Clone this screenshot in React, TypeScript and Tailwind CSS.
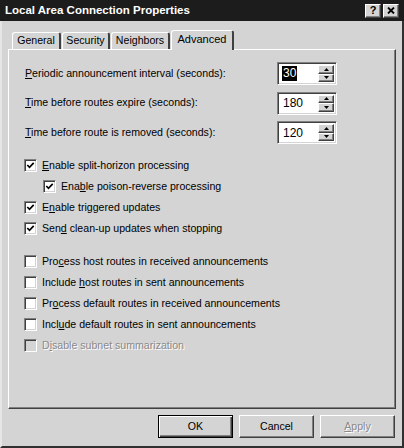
import React from 'react';

const raised =
  'border border-t-white border-l-white border-r-[#404040] border-b-[#404040] shadow-[inset_-1px_-1px_0_#808080]';
const sunken =
  'border border-t-[#808080] border-l-[#808080] border-r-white border-b-white shadow-[inset_1px_1px_0_#404040,inset_-1px_-1px_0_#d4d4d4]';

const CheckMark = () => (
  <svg width="9" height="9" viewBox="0 0 9 9">
    <polyline points="1.3,4 3.5,6.3 7.7,1.8" fill="none" stroke="#000" strokeWidth="1.7" />
  </svg>
);

const Check: React.FC<{
  checked?: boolean;
  disabled?: boolean;
  indent?: boolean;
  children: React.ReactNode;
}> = ({ checked, disabled, indent, children }) => (
  <div className={`flex items-center h-[21px] ${indent ? 'pl-[34px]' : 'pl-[15px]'}`}>
    <div
      className={`w-[13px] h-[13px] flex items-center justify-center ${sunken} ${
        disabled ? 'bg-[#d4d4d4]' : 'bg-white'
      }`}
    >
      {checked && <CheckMark />}
    </div>
    <span
      className={`ml-[5px] ${
        disabled ? 'text-[#8a8a8a] [text-shadow:1px_1px_0_#fff]' : 'text-black'
      }`}
    >
      {children}
    </span>
  </div>
);

const Arrow: React.FC<{ up?: boolean }> = ({ up }) => (
  <svg width="5" height="3" viewBox="0 0 5 3">
    <polygon points={up ? '2.5,0 5,3 0,3' : '0,0 5,0 2.5,3'} fill="#000" />
  </svg>
);

const Spin: React.FC<{ value: string; selected?: boolean }> = ({ value, selected }) => (
  <div className={`w-[60px] h-[23px] bg-white flex items-stretch p-[2px] ${sunken}`}>
    <div className="flex-1 flex items-center pl-[2px] text-[12px]">
      <span className={selected ? 'bg-black text-white px-[1px] leading-[15px]' : 'px-[1px]'}>{value}</span>
    </div>
    <div className="w-[16px] flex flex-col">
      <div className={`flex-1 bg-[#d4d4d4] flex items-center justify-center ${raised}`}>
        <Arrow up />
      </div>
      <div className={`flex-1 bg-[#d4d4d4] flex items-center justify-center ${raised}`}>
        <Arrow />
      </div>
    </div>
  </div>
);

const Tab: React.FC<{ label: string; width: string; active?: boolean }> = ({ label, width, active }) => (
  <div
    className={`${width} flex items-center justify-center bg-[#d4d4d4] rounded-t-[3px] border-t border-l border-t-white border-l-white border-r-2 border-r-[#404040] ${
      active ? 'h-[20px] -mb-[1px] relative z-10 text-[11px] pb-[3px]' : 'h-[17px]'
    }`}
  >
    {label}
  </div>
);

const Button: React.FC<{ children: React.ReactNode; primary?: boolean; disabled?: boolean }> = ({
  children,
  primary,
  disabled,
}) => (
  <div
    className={`w-[75px] h-[23px] flex items-center justify-center bg-[#d4d4d4] ${
      primary
        ? 'border border-black shadow-[inset_1px_1px_0_#fff,inset_-1px_-1px_0_#404040,inset_-2px_-2px_0_#808080]'
        : raised
    } ${disabled ? 'text-[#8a8a8a] [text-shadow:1px_1px_0_#fff]' : 'text-black'}`}
  >
    {children}
  </div>
);

export default function App() {
  return (
    <div
      className="w-[404px] h-[448px] flex flex-col bg-[#d4d4d4] text-[10.6px] text-black"
      style={{ fontFamily: '"Liberation Sans", Arial, sans-serif' }}
    >
      {/* Title bar */}
      <div className="h-[21px] bg-[#1c1c1c] flex items-center justify-between pl-[5px] pr-[5px]">
        <span className="text-white font-bold text-[11.5px]">Local Area Connection Properties</span>
        <div className="flex gap-[2px]">
          <div className={`w-[16px] h-[14px] bg-[#d4d4d4] flex items-center justify-center font-bold text-[11px] ${raised}`}>
            ?
          </div>
          <div className={`w-[16px] h-[14px] bg-[#d4d4d4] flex items-center justify-center ${raised}`}>
            <svg width="8" height="7" viewBox="0 0 8 7">
              <path d="M1 0.5 L7 6.5 M7 0.5 L1 6.5" stroke="#000" strokeWidth="1.8" />
            </svg>
          </div>
        </div>
      </div>

      {/* Body */}
      <div className="flex-1 flex flex-col border-l-2 border-l-[#e6e6e6] border-r-2 border-r-[#303030] border-b-2 border-b-[#303030]">
        <div className="pt-[9px] px-[6px]">
          {/* Tabs */}
          <div className="flex items-end gap-[1px] pl-[4px] h-[19px]">
            <Tab label="General" width="w-[49px]" />
            <Tab label="Security" width="w-[48px]" />
            <Tab label="Neighbors" width="w-[59px]" />
            <Tab label="Advanced" width="w-[63px]" active />
          </div>

          {/* Panel */}
          <div className={`h-[360px] flex flex-col ${raised} pt-[12px]`}>
            <div className="flex flex-col gap-[6.5px] pl-[16px] pr-[58px]">
              <div className="flex items-center justify-between">
                <span>
                  <u>P</u>eriodic announcement interval (seconds):
                </span>
                <Spin value="30" selected />
              </div>
              <div className="flex items-center justify-between">
                <span>
                  <u>T</u>ime before routes expire (seconds):
                </span>
                <Spin value="180" />
              </div>
              <div className="flex items-center justify-between">
                <span>
                  <u>T</u>ime before route is removed (seconds):
                </span>
                <Spin value="120" />
              </div>
            </div>

            <div className="mt-[11px] flex flex-col">
              <Check checked>
                <u>E</u>nable split-horizon processing
              </Check>
              <Check checked indent>
                Ena<u>b</u>le poison-reverse processing
              </Check>
              <Check checked>
                E<u>n</u>able triggered updates
              </Check>
              <Check checked>
                Sen<u>d</u> clean-up updates when stopping
              </Check>
            </div>

            <div className="mt-[12px] flex flex-col">
              <Check>
                Pro<u>c</u>ess host routes in received announcements
              </Check>
              <Check>
                Include <u>h</u>ost routes in sent announcements
              </Check>
              <Check>
                Pr<u>o</u>cess default routes in received announcements
              </Check>
              <Check>
                Incl<u>u</u>de default routes in sent announcements
              </Check>
              <Check disabled>
                D<u>i</u>sable subnet summarization
              </Check>
            </div>
          </div>
        </div>

        {/* Buttons */}
        <div className="flex justify-end gap-[6px] pr-[7px] mt-[6px]">
          <Button primary>OK</Button>
          <Button>Cancel</Button>
          <Button disabled>
            <u>A</u>pply
          </Button>
        </div>
      </div>
    </div>
  );
}
